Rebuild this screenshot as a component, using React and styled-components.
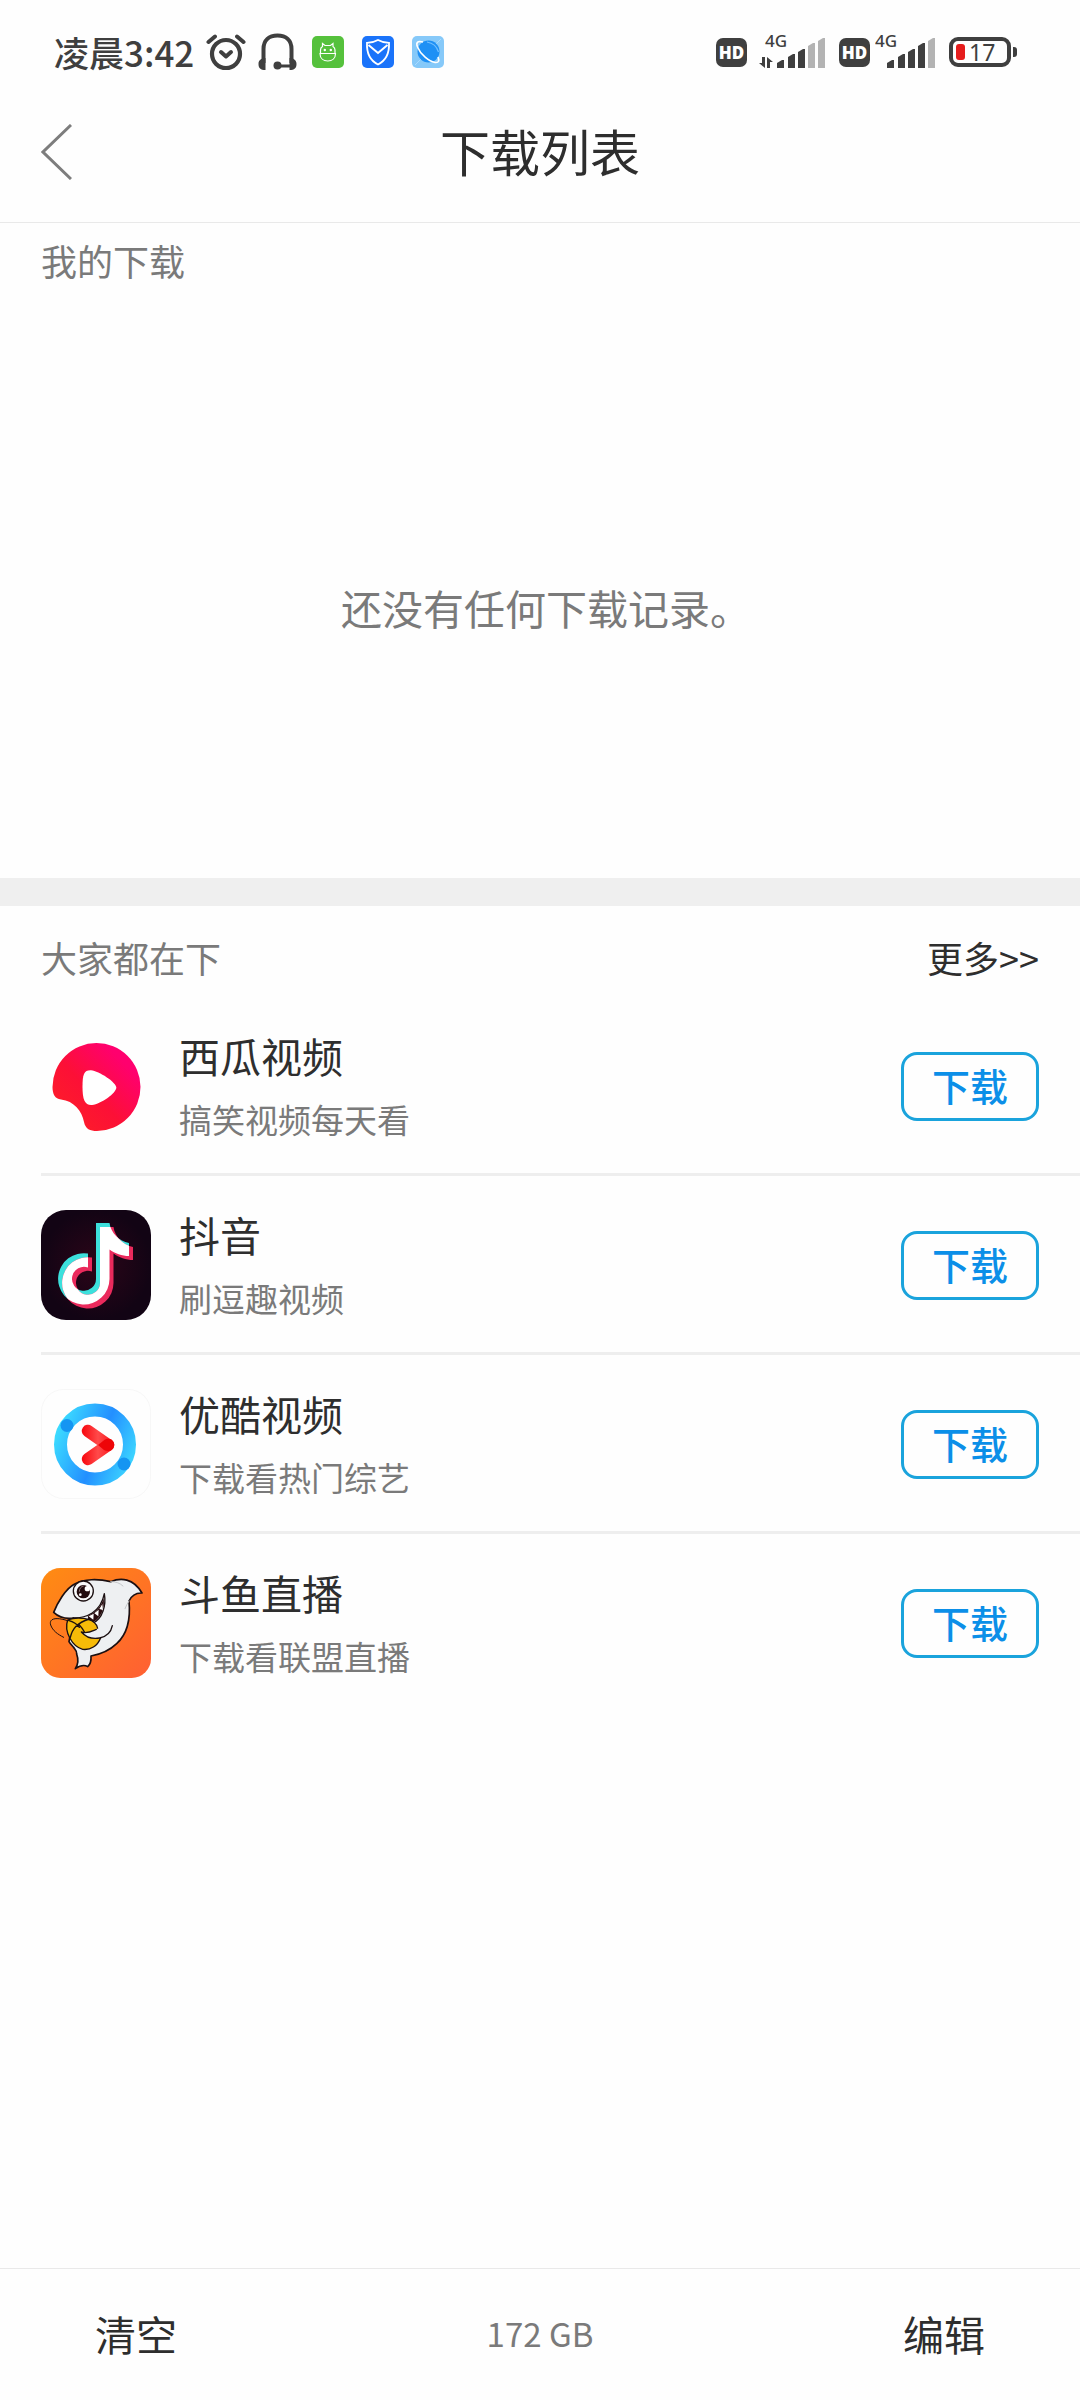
import React from "react";
import styled, { createGlobalStyle } from "styled-components";

const GlobalStyle = createGlobalStyle`
  * {
    box-sizing: border-box;
  }
  body {
    margin: 0;
    background: #fefefe;
    color: #2e2e2e;
    font-family: "Noto Sans CJK SC", "Noto Sans", sans-serif;
  }
  h1, h2, h3, p, ul {
    margin: 0;
    padding: 0;
    font-weight: 400;
  }
  button {
    font-family: inherit;
    color: inherit;
    background: none;
    border: none;
    padding: 0;
    cursor: pointer;
  }
`;

const Page = styled.div`
  min-height: 100vh;
  display: flex;
  flex-direction: column;
`;
const StatusBar = styled.div`
  height: 82px;
  padding: 22px 63px 0 54px;
  display: flex;
  justify-content: space-between;
  align-items: center;
  color: #3f3f3f;
`;
const StatusGroup = styled.div`
  display: flex;
  align-items: center;
  gap: ${(props) => props.$gap}px;
`;
const Clock = styled.span`
  font-size: 35px;
  line-height: 40px;
  font-weight: 500;
`;
const HdBadge = styled.span`
  width: 31px;
  height: 29px;
  border-radius: 7px;
  background: #3f3f3f;
  color: white;
  display: flex;
  align-items: center;
  justify-content: center;
  font: 800 17px/17px "Open Sans", sans-serif;
`;
const BatteryWrapper = styled.div`
  display: flex;
  align-items: center;
  gap: 2px;
`;
const Battery = styled.div`
  width: 62px;
  height: 30px;
  border: 4px solid #3f3f3f;
  border-radius: 9px;
  padding: 0 3px;
  display: flex;
  align-items: center;
  gap: 4px;
  font: 400 23px/22px "Noto Sans", sans-serif;
`;
const BatteryLevel = styled.span`
  width: 9px;
  height: 16px;
  border-radius: 3px;
  background: #e51c1c;
`;
const BatteryCap = styled.span`
  width: 4px;
  height: 10px;
  border-radius: 0 3px 3px 0;
  background: #3f3f3f;
`;

const Header = styled.header`
  height: 141px;
  padding: 0 41px;
  display: grid;
  grid-template-columns: 1fr auto 1fr;
  align-items: center;
  border-bottom: 1px solid #e9e9e9;
`;
const BackButton = styled.button`
  display: flex;
  justify-self: start;
`;
const Title = styled.h1`
  padding-bottom: 4px;
  font-size: 50px;
  line-height: 64px;
`;

const Section = styled.section`
  display: flex;
  flex-direction: column;
`;
const SectionTitle = styled.h2`
  font-size: 36px;
  line-height: 48px;
  color: #7a7a7a;
`;
const SectionHeader = styled.div`
  padding: ${(props) => props.$top}px 41px 16px;
  display: flex;
  justify-content: space-between;
  align-items: center;
`;
const MoreLink = styled.a`
  font-size: 36px;
  line-height: 48px;
  color: #2e2e2e;
  text-decoration: none;
`;
const EmptyText = styled.p`
  padding: 279px 0 243px 12px;
  font-size: 41px;
  line-height: 56px;
  text-align: center;
  color: #7a7a7a;
`;
const Divider = styled.div`
  height: 28px;
  background: #efefef;
`;

const AppList = styled.ul`
  list-style: none;
`;
const AppRow = styled.li`
  margin-left: 41px;
  padding: 34px 41px 32px 0;
  display: flex;
  align-items: center;
  border-bottom: 3px solid #eeeeee;
  &:last-child {
    border-bottom: none;
  }
`;
const AppInfo = styled.div`
  flex: 1;
  height: 110px;
  margin-left: 28px;
  display: flex;
  flex-direction: column;
  gap: 18px;
`;
const AppName = styled.h3`
  font-size: 41px;
  line-height: 48px;
`;
const AppText = styled.p`
  font-size: 33px;
  line-height: 44px;
  color: #7a7a7a;
`;
const DownloadButton = styled.button`
  width: 138px;
  height: 69px;
  padding-bottom: 2px;
  border: 3px solid #1aa3dc;
  border-radius: 16px;
  color: #0b8fe8;
  font-size: 38px;
  line-height: 48px;
  font-weight: 500;
`;

const Footer = styled.footer`
  margin-top: auto;
  height: 132px;
  padding: 0 95px 4px;
  display: flex;
  justify-content: space-between;
  align-items: center;
  border-top: 1px solid #e9e9e9;
`;
const FooterButton = styled.button`
  font-size: 41px;
  line-height: 56px;
`;
const Storage = styled.span`
  font-size: 33px;
  line-height: 44px;
  color: #7a7a7a;
`;

function AlarmIcon() {
  return (
    <svg width="40" height="38" viewBox="0 0 40 38" fill="none" stroke="#3f3f3f" strokeLinecap="round" strokeLinejoin="round">
      <circle cx="20" cy="21" r="14" strokeWidth="4.200" />
      <path d="M2.500 9 9 3.500M37.500 9 31 3.500" strokeWidth="4" />
      <path d="M15 19 20 23.500 25 19" strokeWidth="4" />
    </svg>
  );
}

function HeadphonesIcon() {
  return (
    <svg width="42" height="38" viewBox="0 0 42 38" fill="none" stroke="#3f3f3f">
      <path d="M5.500 30V16C5.500 7 11 2.500 19.500 2.500S33.500 7 33.500 16V30" strokeWidth="4" />
      <path d="M20 33H33" strokeWidth="3" />
      <circle cx="19.500" cy="32.500" r="4" fill="#3f3f3f" stroke="none" />
      <path d="M7.500 25V37C2.500 37 .5 35 .5 31S3 25.500 7.500 25ZM31.500 25V37C36.500 37 38.500 35 38.500 31S36 25.500 31.500 25Z" fill="#3f3f3f" stroke="none" />
    </svg>
  );
}

function AndroidBadge() {
  return (
    <svg width="32" height="32" viewBox="0 0 32 32" fill="none" stroke="white">
      <rect width="32" height="32" rx="5" fill="#55c13c" stroke="none" />
      <path d="M8 17.500H23.500C23.500 22.500 20 25 15.800 25S8 22.500 8 17.500ZM8.500 17.500V14C8.500 12.500 9.500 11 10.500 10.500V7.500L13 9.500H18.500L21 7.500V10.500C22.500 11.500 23 12.500 23 14V17.500" strokeWidth="1.200" />
      <circle cx="12.800" cy="14" r="1.200" fill="white" stroke="none" />
      <circle cx="18.800" cy="14" r="1.200" fill="white" stroke="none" />
    </svg>
  );
}

function ShieldBadge() {
  return (
    <svg width="32" height="32" viewBox="0 0 32 32" fill="none" stroke="white">
      <rect width="32" height="32" rx="5" fill="#1a73fa" stroke="none" />
      <path d="M16 4C12.500 6 9 6.800 5 6.800C4.500 17 8 24.500 16 28.500C24 24.500 27.500 17 27 6.800C23 6.800 19.500 6 16 4Z" strokeWidth="1.800" />
      <path d="M6.500 9 16 17 25.500 9" strokeWidth="2" />
    </svg>
  );
}

function PlanetBadge() {
  return (
    <svg width="32" height="32" viewBox="0 0 32 32" fill="none">
      <rect width="32" height="32" rx="5" fill="#86c9f9" />
      <path d="M3 29 29 3" stroke="#a9daff" />
      <circle cx="16.500" cy="15.500" r="11" fill="#1e90f5" />
      <path d="M15 6C21 7 25 11 26.500 16" stroke="#70bfff" strokeWidth="1.200" />
      <path d="M11 6C6 4.500 3.500 6 5.500 11C8.500 18.500 17 25.500 23 26.500C27 27 27.500 24.500 26 21" stroke="white" strokeWidth="1.600" />
    </svg>
  );
}

const bars = [
  { x: 12, y: 26 },
  { x: 23, y: 20 },
  { x: 33, y: 15 },
  { x: 43, y: 9 },
  { x: 53, y: 4 },
];

function Signal({ level, data }) {
  const left = data ? -6 : 0;
  return (
    <svg width={62 - left} height="52" viewBox={`${left} -8 ${62 - left} 52`}>
      <text x="0" y="13" fontFamily="Noto Sans, sans-serif" fontSize="17" fontWeight="500" fill="#3f3f3f">
        4G
      </text>
      {data && (
        <path d="M0 23V34L-6 29H-3V23ZM2 34V23L8 28H5V34Z" fill="#3f3f3f" />
      )}
      {bars.map(({ x, y }, i) => (
        <path
          key={x}
          d={`M${x} 34V${y + 3}L${x + 5} ${y}H${x + 7}V34Z`}
          fill={i < level ? "#3f3f3f" : "#b3b3b3"}
        />
      ))}
    </svg>
  );
}

function XiguaLogo() {
  return (
    <svg width="110" height="110" viewBox="0 0 110 110">
      <defs>
        <linearGradient id="xigua" x1="0.2" y1="0.8" x2="0.8" y2="0.2">
          <stop offset="0" stopColor="#fd1a2c" />
          <stop offset="0.4" stopColor="#fc1036" />
          <stop offset="1" stopColor="#ff006e" />
        </linearGradient>
      </defs>
      <path d="M11.500 56A44 44 0 1 1 56 100C49 100 44.500 98 43 91C41 80 33 70 20 68.500C14 68 11.500 63 11.500 56Z" fill="url(#xigua)" />
      <path d="M41.500 56C41.500 43 43 39 50 39.200C58 40 75 51 75.300 56.500C75.500 62 60 73 51 74C44 74.500 41.500 69 41.500 56Z" fill="white" />
    </svg>
  );
}

const note =
  "M55 13H68.500C70 23 78 31 88 33V46C81 46 74 43.500 68.500 39.500V69A25.700 25.700 0 1 1 47 43.500V57.500A12 12 0 1 0 55 69Z";

function DouyinLogo() {
  return (
    <svg width="110" height="110" viewBox="0 0 110 110">
      <defs>
        <radialGradient id="douyin">
          <stop offset="0" stopColor="#2c0518" />
          <stop offset="1" stopColor="#120414" />
        </radialGradient>
        <clipPath id="note">
          <path d={note} />
        </clipPath>
      </defs>
      <rect width="110" height="110" rx="25" fill="url(#douyin)" />
      <path d={note} fill="#3ce0dc" />
      <path d={note} fill="#ea2a5c" transform="translate(4 4)" />
      <g clipPath="url(#note)">
        <path d={note} fill="white" transform="translate(4 4)" />
      </g>
    </svg>
  );
}

function YoukuLogo() {
  return (
    <svg width="110" height="110" viewBox="0 0 110 110" fill="none">
      <defs>
        <linearGradient id="youku" gradientUnits="userSpaceOnUse" x1="16" y1="40" x2="92" y2="71">
          <stop offset="0" stopColor="#3cdcff" />
          <stop offset="0.55" stopColor="#238fff" />
          <stop offset="1" stopColor="#3cd4ff" />
        </linearGradient>
        <linearGradient id="arrow" gradientUnits="userSpaceOnUse" x1="42" y1="0" x2="72" y2="0">
          <stop offset="0" stopColor="#f80b12" />
          <stop offset="0.5" stopColor="#ff4a4a" />
          <stop offset="1" stopColor="#f8141a" />
        </linearGradient>
      </defs>
      <rect x="0.5" y="0.5" width="109" height="109" rx="22" stroke="#f7f7f7" />
      <circle cx="54" cy="55.500" r="34.500" stroke="url(#youku)" strokeWidth="13" />
      <circle cx="26" cy="36.500" r="6.500" fill="#1595f2" />
      <circle cx="83" cy="75" r="6.500" fill="#1595f2" />
      <g stroke="url(#arrow)" strokeWidth="12.500" strokeLinecap="round">
        <path d="M47 70 67 56" />
        <path d="M47 42 67 56" />
      </g>
      <path d="M57 56 64 50.500C69 48 74 52 73 57C72 62 67 63 63 61Z" fill="#ee0508" />
    </svg>
  );
}

function DouyuLogo() {
  return (
    <svg width="110" height="110" viewBox="63 54 330 330" fill="none" strokeLinejoin="round" strokeLinecap="round">
      <defs>
        <linearGradient id="douyu" x1="0" y1="0" x2="1" y2="1">
          <stop offset="0" stopColor="#ff8c12" />
          <stop offset="1" stopColor="#ff5f33" />
        </linearGradient>
      </defs>
      <rect x="63" y="54" width="330" height="330" rx="58" fill="url(#douyu)" />
      <path
        d="M101 187C112 160 136 116 164 102C192 86 235 86 272 95C302 82 340 84 366 129C348 128 334 138 327 153C332 205 322 252 290 281C266 304 236 314 213 318C214 333 209 345 203 350C192 343 181 346 166 356C176 341 175 326 170 312C171 302 165 298 160 291C154 285 150 281 147 275L160 204C138 207 116 201 101 187Z"
        fill="#eef0f2"
        stroke="#1c1012"
        strokeWidth="5"
      />
      <path d="M272 95C288 94 300 100 309 108M327 153C322 161 318 168 315 176" stroke="#c4c7ca" strokeWidth="3" />
      <path d="M160 204C198 204 242 188 253 131C259 165 248 207 219 219C210 216 206 210 206 202" fill="#eef0f2" stroke="#1c1012" strokeWidth="4" />
      <path d="M203 198C228 188 244 168 251 145C255 172 244 205 219 217C210 214 206 208 203 198Z" fill="#2a0d10" />
      <path d="M206 199 221 191 220 209ZM223 190 236 179 235 199ZM238 177 247 162 249 180Z" fill="white" />
      <circle cx="190" cy="123" r="30" fill="#f8f9fa" stroke="#1c1012" strokeWidth="4" />
      <circle cx="190" cy="125" r="20" fill="#210b0e" />
      <circle cx="202" cy="116" r="8" fill="white" />
      <circle cx="181" cy="134" r="4" fill="white" />
      <path d="M178 124C178 115 184 109 190 108" stroke="#8b7072" strokeWidth="3" />
      <path d="M143 210C170 199 216 203 230 226L242 263C233 288 211 301 188 298C157 290 131 245 143 210Z" fill="#f7bb08" stroke="#1c1012" strokeWidth="4" />
      <path d="M145 211C160 215 171 221 178 232M208 207C170 219 157 237 151 262M178 225C187 234 192 243 195 249" stroke="#1c1012" strokeWidth="4" />
      <path d="M184 246C201 252 215 244 229 238L277 218C282 240 263 260 237 264C215 268 196 260 184 246Z" fill="#eef0f2" />
      <path d="M229 238C215 244 201 252 184 246C198 262 218 268 239 264C259 260 273 247 277 227" stroke="#1c1012" strokeWidth="4" />
      <path d="M143 212C110 201 86 204 92 225C98 242 113 253 131 262" stroke="#1c1012" strokeWidth="3" />
    </svg>
  );
}

const apps = [
  { name: "西瓜视频", text: "搞笑视频每天看", Logo: XiguaLogo },
  { name: "抖音", text: "刷逗趣视频", Logo: DouyinLogo },
  { name: "优酷视频", text: "下载看热门综艺", Logo: YoukuLogo },
  { name: "斗鱼直播", text: "下载看联盟直播", Logo: DouyuLogo },
];

export default function App() {
  return (
    <Page lang="zh-CN">
      <GlobalStyle />
      <StatusBar>
        <StatusGroup $gap={12}>
          <Clock>凌晨3:42</Clock>
          <AlarmIcon />
          <HeadphonesIcon />
          <StatusGroup $gap={18}>
            <AndroidBadge />
            <ShieldBadge />
            <PlanetBadge />
          </StatusGroup>
        </StatusGroup>
        <StatusGroup $gap={12}>
          <StatusGroup $gap={12}>
            <HdBadge>HD</HdBadge>
            <Signal level={3} data />
          </StatusGroup>
          <StatusGroup $gap={5}>
            <HdBadge>HD</HdBadge>
            <Signal level={4} />
          </StatusGroup>
          <BatteryWrapper>
            <Battery>
              <BatteryLevel />
              17
            </Battery>
            <BatteryCap />
          </BatteryWrapper>
        </StatusGroup>
      </StatusBar>

      <Header>
        <BackButton aria-label="返回">
          <svg width="31" height="56" viewBox="0 0 31 56" fill="none" stroke="#7d7d7d" strokeWidth="3">
            <path d="M30 1 2 28 30 55" />
          </svg>
        </BackButton>
        <Title>下载列表</Title>
      </Header>

      <Section>
        <SectionHeader $top={13}>
          <SectionTitle>我的下载</SectionTitle>
        </SectionHeader>
        <EmptyText>还没有任何下载记录。</EmptyText>
      </Section>
      <Divider />
      <Section>
        <SectionHeader $top={27}>
          <SectionTitle>大家都在下</SectionTitle>
          <MoreLink href="#more">更多&gt;&gt;</MoreLink>
        </SectionHeader>
        <AppList>
          {apps.map(({ name, text, Logo }) => (
            <AppRow key={name}>
              <Logo />
              <AppInfo>
                <AppName>{name}</AppName>
                <AppText>{text}</AppText>
              </AppInfo>
              <DownloadButton aria-label={"下载 " + name}>下载</DownloadButton>
            </AppRow>
          ))}
        </AppList>
      </Section>

      <Footer>
        <FooterButton>清空</FooterButton>
        <Storage>172 GB</Storage>
        <FooterButton>编辑</FooterButton>
      </Footer>
    </Page>
  );
}
